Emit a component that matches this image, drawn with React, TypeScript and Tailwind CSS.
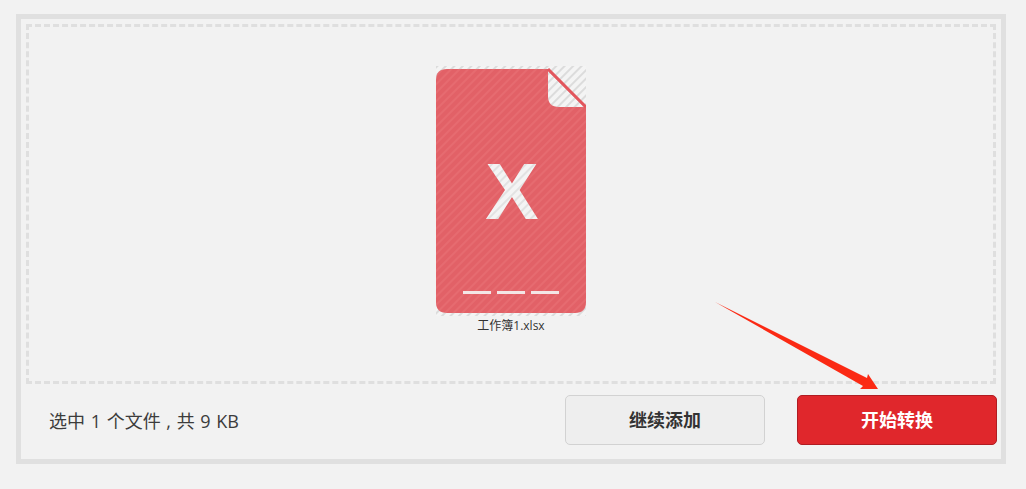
const fontStack = '"Open Sans", "Noto Sans CJK SC", sans-serif';

const FileIcon = () => {
  return (
    <svg width="150" height="250" viewBox="0 0 150 250" className="block">
      <defs>
        <pattern id="hatch" width="6" height="6" patternUnits="userSpaceOnUse" patternTransform="rotate(-45)">
          <rect width="6" height="6" fill="#f4f4f4" />
          <rect width="6" height="2" fill="#dcdcdc" />
        </pattern>
        <pattern id="redHatch" width="6" height="6" patternUnits="userSpaceOnUse" patternTransform="rotate(-45)">
          <rect width="6" height="6" fill="#e26167" />
          <rect width="6" height="2" fill="#e66b70" />
        </pattern>
        <pattern id="glyphHatch" width="6" height="6" patternUnits="userSpaceOnUse" patternTransform="rotate(-45)">
          <rect width="6" height="6" fill="#f4f4f4" />
          <rect width="6" height="2" fill="#e2e2e2" />
        </pattern>
      </defs>
      <rect x="0" y="0" width="150" height="250" fill="url(#hatch)" />
      <path
        d="M11 3H112L150 41V236Q150 247 139 247H11Q0 247 0 236V14Q0 3 11 3Z"
        fill="url(#redHatch)"
      />
      <path d="M112 5L148 41H123Q112 41 112 30Z" fill="url(#hatch)" />
      <path d="M112 3L150 41" stroke="#e2565d" strokeWidth="3" fill="none" />
      <text
        x="76"
        y="153"
        textAnchor="middle"
        fontFamily='"Liberation Sans", sans-serif'
        fontWeight="700"
        fontSize="80"
        fill="url(#glyphHatch)"
      >
        X
      </text>
      <rect x="27" y="225" width="28" height="3" fill="#f3e6e6" />
      <rect x="61" y="225" width="28" height="3" fill="#f3e6e6" />
      <rect x="95" y="225" width="28" height="3" fill="#f3e6e6" />
    </svg>
  );
};

export default function App() {
  return (
    <div
      className="relative h-[489px] w-[1026px] overflow-hidden bg-[#f2f2f2] pl-[16px] pt-[14px]"
      style={{ fontFamily: fontStack }}
    >
      <div className="h-[450px] w-[990px] border-[5px] border-[#e0e0e0] p-[5px]">
        <div className="flex h-[360px] w-[970px] flex-col items-center border-[3px] border-dashed border-[#dfdfdf] pt-[39px]">
          <FileIcon />
          <div className="mt-[2px] text-[12px] leading-[16px] text-[#333]">工作簿1.xlsx</div>
        </div>
        <div className="mt-[11px] flex h-[50px] items-center justify-between pl-[23px]">
          <div className="pt-[3px] text-[18px] text-[#3c3c3c] [word-spacing:1px]">选中 1 个文件 , 共 9 KB</div>
          <div className="-mr-[1px] flex gap-[32px]">
            <button className="h-[50px] w-[200px] rounded-[5px] border border-[#d2d2d2] bg-[#eeeeee] text-[18px] font-bold text-[#333]">
              继续添加
            </button>
            <button className="h-[50px] w-[200px] rounded-[5px] border border-[#b01c22] bg-[#e0272c] text-[18px] font-bold text-white">
              开始转换
            </button>
          </div>
        </div>
      </div>
      <svg width="180" height="100" viewBox="0 0 180 100" className="absolute left-[710px] top-[298px]">
        <path d="M5 4L157 80L158 76L168 91L150 91L153 88Z" fill="#fb2a14" />
      </svg>
    </div>
  );
}
